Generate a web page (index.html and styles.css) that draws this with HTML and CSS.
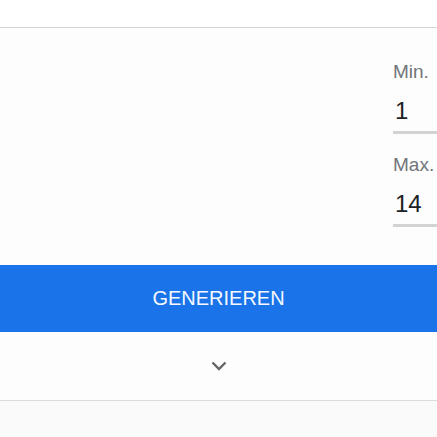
FILE: index.html
```html
<!DOCTYPE html>
<html lang="de">
<head>
    <meta charset="UTF-8">
    <meta name="viewport" content="width=device-width, initial-scale=1.0">
    <title>Zufallszahl</title>
    <link rel="stylesheet" href="styles.css">
</head>
<body>
    <div class="topbar"></div>
    <div class="panel">
        <div class="fields">
            <div class="field">
                <label for="min">Min.</label>
                <input type="text" id="min" value="1">
            </div>
            <div class="field">
                <label for="max">Max.</label>
                <input type="text" id="max" value="14">
            </div>
        </div>
        <button type="button" class="generate">GENERIEREN</button>
        <div class="more">
            <svg width="16" height="10" viewBox="0 0 16 10">
                <path d="M1.5 1.5 L8 8 L14.5 1.5" fill="none" stroke="#666" stroke-width="2.4"/>
            </svg>
        </div>
    </div>
    <div class="footer"></div>
</body>
</html>
```

FILE: styles.css
```css
body {
    font-family: 'Liberation Sans', Arial, sans-serif;
    background-color: #fafafa;
    margin: 0;
    overflow: hidden;
}
.topbar {
    height: 27px;
    background-color: #ffffff;
    border-bottom: 1px solid #d6d6d6;
}
.panel {
    background-color: #fdfdfd;
    border-bottom: 1px solid #dcdcdc;
}
.fields {
    display: flex;
    flex-direction: column;
    align-items: flex-end;
    gap: 20px;
    padding-top: 33px;
}
.field {
    width: 44px;
    display: flex;
    flex-direction: column;
}
label {
    color: #70757a;
    font-size: 19px;
    line-height: 22px;
}
input {
    width: 100%;
    border: none;
    border-bottom: 3px solid #d3d3d3;
    background: transparent;
    margin: 14px 0 0;
    padding: 0 0 6px 2px;
    font-family: inherit;
    font-size: 24px;
    line-height: 28px;
    color: #202124;
    outline: none;
}
.generate {
    display: block;
    width: 100%;
    height: 67px;
    margin-top: 38px;
    border: none;
    background-color: #1a73e8;
    color: #f4f8ff;
    font-family: inherit;
    font-size: 20px;
    cursor: pointer;
}
.more {
    height: 68px;
    display: flex;
    justify-content: center;
    align-items: center;
}
.footer {
    height: 40px;
}
```
